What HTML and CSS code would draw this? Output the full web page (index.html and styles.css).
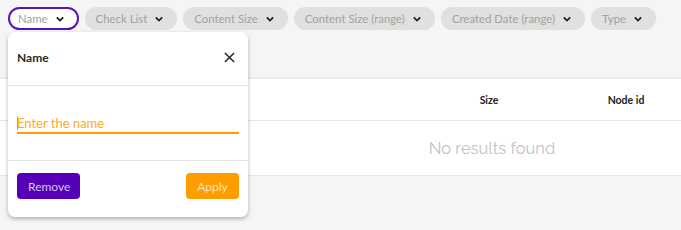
FILE: index.html
```html
<!DOCTYPE html>
<html>
<head>
<meta charset="utf-8">
<link rel="stylesheet" href="styles.css">
</head>
<body>
<div class="filters">
  <div class="chip chip-active">Name <svg class="chev" viewBox="0 0 10 6"><polyline points="1,1 5,5 9,1"/></svg></div>
  <div class="chip">Check List <svg class="chev" viewBox="0 0 10 6"><polyline points="1,1 5,5 9,1"/></svg></div>
  <div class="chip">Content Size <svg class="chev" viewBox="0 0 10 6"><polyline points="1,1 5,5 9,1"/></svg></div>
  <div class="chip">Content Size (range) <svg class="chev" viewBox="0 0 10 6"><polyline points="1,1 5,5 9,1"/></svg></div>
  <div class="chip">Created Date (range) <svg class="chev" viewBox="0 0 10 6"><polyline points="1,1 5,5 9,1"/></svg></div>
  <div class="chip">Type <svg class="chev" viewBox="0 0 10 6"><polyline points="1,1 5,5 9,1"/></svg></div>
</div>

<div class="table">
  <div class="thead">
    <div></div>
    <div class="th">Size</div>
    <div class="th">Node id</div>
  </div>
  <div class="empty">No results found</div>
</div>

<div class="popover">
  <div class="pop-head">
    <span class="pop-title">Name</span>
    <svg class="close" viewBox="0 0 12 12"><path d="M1 1 L11 11 M11 1 L1 11"/></svg>
  </div>
  <div class="pop-body">
    <div class="field"><span class="caret"></span><span class="placeholder">Enter the name</span></div>
  </div>
  <div class="pop-foot">
    <button class="btn btn-remove">Remove</button>
    <button class="btn btn-apply">Apply</button>
  </div>
</div>
</body>
</html>
```

FILE: styles.css
```css
* { box-sizing: border-box; }
body {
  margin: 0;
  background: #f5f5f5;
  font-family: "Lato", "Open Sans", sans-serif;
  width: 681px;
  height: 230px;
  overflow: hidden;
  position: relative;
}
.filters {
  display: flex;
  gap: 6px;
  padding: 7px 8px 0;
}
.chip {
  height: 23px;
  border-radius: 12px;
  background: #e0e0e0;
  color: #a0a0a0;
  font-size: 11.4px;
  display: flex;
  align-items: center;
  gap: 8px;
  padding: 0 14px 0 11px;
  white-space: nowrap;
}
.chip-active {
  background: #fff;
  border: 2px solid #5a12be;
  padding: 0 13px 0 8px;
}
.chev {
  width: 8px;
  height: 6px;
  fill: none;
  stroke: #1e1e1e;
  stroke-width: 2.2;
}
.table {
  margin-top: 47px;
  background: #fff;
  border-top: 2px solid #ebebeb;
  border-bottom: 1px solid #e6e6e6;
}
.thead {
  display: grid;
  grid-template-columns: 1fr 110px 110px;
  column-gap: 27px;
  height: 42px;
  align-items: center;
  border-bottom: 1px solid #e6e6e6;
}
.th {
  text-align: center;
  font-size: 10.5px;
  font-weight: 700;
  color: #222;
}
.empty {
  height: 54px;
  display: flex;
  align-items: center;
  justify-content: center;
  padding-left: 303px;
  font-family: "Raleway", "Lato", sans-serif;
  font-size: 16.5px;
  color: #c2c2c2;
}
.popover {
  position: absolute;
  left: 8px;
  top: 32px;
  width: 240px;
  height: 185px;
  background: #fff;
  border-radius: 7px;
  box-shadow: 0 2px 4px rgba(0,0,0,0.28);
  display: flex;
  flex-direction: column;
}
.pop-head {
  height: 54px;
  display: flex;
  align-items: center;
  justify-content: space-between;
  padding: 0 13px 2px 9px;
  border-bottom: 1px solid #e3e3e3;
}
.pop-title {
  font-size: 12px;
  font-weight: 700;
  color: #2a2a2a;
}
.close {
  width: 11px;
  height: 11px;
  stroke: #222;
  stroke-width: 1.6;
  fill: none;
}
.pop-body {
  height: 75px;
  padding: 27px 9px 0;
  border-bottom: 1px solid #e3e3e3;
}
.field {
  height: 21px;
  border-bottom: 2px solid #ff9d00;
  display: flex;
  align-items: center;
  position: relative;
}
.caret {
  width: 1px;
  height: 14px;
  background: #ff9d00;
  margin-right: -1px;
}
.placeholder {
  color: #ffaa22;
  font-size: 13px;
}
.pop-foot {
  flex: 1;
  display: flex;
  justify-content: space-between;
  align-items: flex-start;
  padding: 12px 9px 0;
}
.btn {
  height: 26px;
  border: none;
  border-radius: 4px;
  font-family: "Lato", sans-serif;
  font-size: 12px;
  padding: 0 11px;
}
.btn-remove {
  width: 63px;
  background: #5500b8;
  color: #d6c6f0;
}
.btn-apply {
  width: 53px;
  background: #ff9d00;
  color: #ffe3b8;
}
```
